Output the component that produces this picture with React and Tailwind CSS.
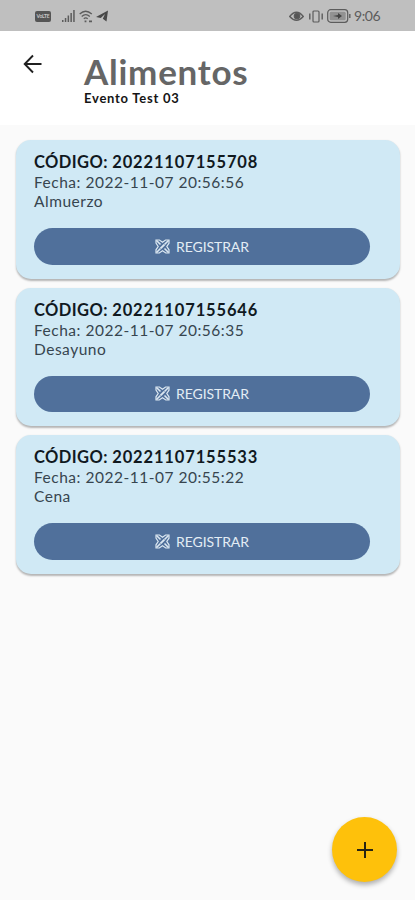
import React from "react";

const events = [
  { code: "20221107155708", date: "2022-11-07 20:56:56", meal: "Almuerzo" },
  { code: "20221107155646", date: "2022-11-07 20:56:35", meal: "Desayuno" },
  { code: "20221107155533", date: "2022-11-07 20:55:22", meal: "Cena" },
];

function ScanIcon() {
  return (
    <svg className="h-[15px] w-[15px] shrink-0" viewBox="0 0 15 15" fill="none" stroke="#dce8f2" strokeWidth="1.2">
      <path d="M1 4V1h3.4L7.5 3.2 10.6 1H14v3.2L11.8 7.5 14 10.8V14h-3.2L7.5 11.8 4.2 14H1v-3.2L3.2 7.5z" />
      <path d="M1.5 1.5L5.5 5.5M13.5 1.5L9.5 5.5M1.5 13.5L5.5 9.5M13.5 13.5L9.5 9.5" strokeWidth="1.6" />
      <path d="M5.6 9.4l3.8-3.8" strokeWidth="2" />
    </svg>
  );
}

function StatusBar() {
  return (
    <div className="flex h-[31px] shrink-0 items-center bg-[#bfbfbf] pt-px pr-[34px] pl-[35px] text-[#5c5c5c]">
      <div className="flex h-[11px] w-4 items-center justify-center overflow-hidden rounded-[2px] bg-[#555] text-[5px] leading-none font-bold tracking-[-0.2px] text-[#c8c8c8]">
        VoLTE
      </div>
      <svg className="ml-[11px] h-3 w-[13px]" viewBox="0 0 13 12" fill="currentColor">
        <path d="M0 10h1.5v2H0zM2.8 8h1.5v4H2.8zM5.6 5.5h1.5V12H5.6zM8.4 3h1.5v9H8.4zM11.2 0h1.5v12h-1.5z" />
      </svg>
      <svg className="ml-1 h-[13px] w-[14px]" viewBox="0 0 14 13" fill="none" stroke="currentColor" strokeWidth="1.3">
        <path d="M.7 4Q6.5-1.5 12.8 4M2.7 6.4Q6.8 2.8 10.8 6.4M4.8 8.8Q6.8 7 8.7 8.8" />
        <path d="M5.6 11.4h1.8M10 11.4h3" strokeWidth="1.6" />
      </svg>
      <svg className="ml-[3px] h-3 w-3" viewBox="0 0 12 12" fill="#484848">
        <path d="M0 7L12 .5 10.5 11.5 6.8 8.8 9 4 4.8 8z" />
      </svg>
      <svg className="ml-auto h-[11px] w-[15px]" viewBox="0 0 15 11" fill="none" stroke="currentColor" strokeWidth="1.3">
        <path d="M.7 5.5Q7.5-3 14.3 5.5Q7.5 13 .7 5.5z" />
        <circle cx="8" cy="5" r="2.7" fill="#555" />
      </svg>
      <svg className="ml-[5px] h-[13px] w-[14px]" viewBox="0 0 14 13" fill="none" stroke="currentColor" strokeWidth="1.2">
        <rect x="4" y="1" width="6" height="11" rx="1" />
        <path d="M.8 3.5v6M13.2 3.5v6" strokeWidth="1.4" />
      </svg>
      <svg className="ml-1 h-[14px] w-6" viewBox="0 0 24 14" fill="none" stroke="currentColor">
        <rect x=".7" y=".7" width="20" height="12.6" rx="3" strokeWidth="1.2" />
        <rect x="2.7" y="2.7" width="16" height="8.6" rx="1.5" fill="#929292" stroke="none" />
        <path d="M6 7l5-1V4l4 3-4 3V8z" fill="#444" stroke="none" />
        <path d="M22.8 5v4" strokeWidth="1.4" />
      </svg>
      <span className="ml-[3px] w-[27px] text-[14px] leading-none tracking-[-0.4px] whitespace-nowrap">9:06</span>
    </div>
  );
}

function EventCard({ code, date, meal }) {
  return (
    <article className="h-[138.5px] shrink-0 rounded-[15px] bg-[#d0e9f5] pt-[12px] pr-[30px] pl-[18px] shadow-[0_1.5px_2px_rgba(0,0,0,0.28)]">
      <h2 className="h-[20px] text-[16.5px] leading-[21px] font-bold tracking-[0.4px] whitespace-nowrap text-[#10191f]">
        CÓDIGO: <span className="tracking-[0.86px]">{code}</span>
      </h2>
      <p className="h-[19px] text-[15.5px] leading-[20px] tracking-[0.51px] whitespace-nowrap text-[#37454f]">Fecha: {date}</p>
      <p className="h-[19px] text-[15.5px] leading-[20px] tracking-[0.51px] whitespace-nowrap text-[#37454f]">{meal}</p>
      <button className="mt-[18px] flex h-[36.5px] w-full items-center justify-center gap-[6px] rounded-full bg-[#50709b] text-[14px] tracking-[-0.08px] text-[#e3edf5]">
        <ScanIcon />
        <span>REGISTRAR</span>
      </button>
    </article>
  );
}

export default function App() {
  return (
    <div className="relative flex h-[900px] w-[415px] flex-col overflow-hidden bg-[#fafafa] font-['Lato','Liberation_Sans',sans-serif]">
      <StatusBar />
      <header className="flex h-[94px] shrink-0 bg-white pl-[23px]">
        <button aria-label="Volver" className="mt-[23px] h-5 w-5">
          <svg className="h-5 w-5" viewBox="0 0 20 20" fill="none" stroke="#202020" strokeWidth="1.9">
            <path d="M18.5 10H2M10 1.5L1.7 10l8.3 8.5" />
          </svg>
        </button>
        <div className="ml-[41px] pt-[23px]">
          <h1 className="h-[36px] text-[35px] leading-[34px] font-bold tracking-[0.75px] text-[#666]">Alimentos</h1>
          <p className="text-[13px] leading-[16px] font-bold tracking-[0.75px] text-[#151515]">Evento Test 03</p>
        </div>
      </header>
      <main className="flex flex-col gap-[9.2px] pt-[15px] pr-[15px] pl-4">
        {events.map((event) => (
          <EventCard key={event.code} {...event} />
        ))}
      </main>
      <button aria-label="Agregar" className="absolute top-[817px] left-[332px] flex h-[65px] w-[65px] items-center justify-center rounded-full bg-[#fec10b] shadow-[0_3px_5px_rgba(0,0,0,0.3)]">
        <svg className="h-4 w-4" viewBox="0 0 16 16" stroke="#282513" strokeWidth="2">
          <path d="M8 0v16M0 8h16" />
        </svg>
      </button>
    </div>
  );
}
